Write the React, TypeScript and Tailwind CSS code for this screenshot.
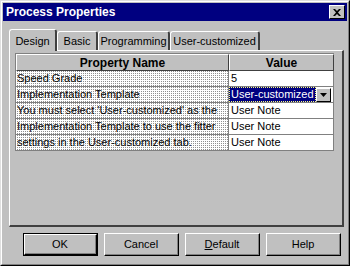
import React from 'react'

const font = { fontFamily: '"Liberation Sans", Arial, sans-serif' }

const rows: { name: string; value: string; combo?: boolean }[] = [
  { name: 'Speed Grade', value: '5' },
  { name: 'Implementation Template', value: 'User-customized', combo: true },
  { name: "You must select 'User-customized' as the", value: 'User Note' },
  { name: 'Implementation Template to use the fitter', value: 'User Note' },
  { name: 'settings in the User-customized tab.', value: 'User Note' },
]

function Tab({ label, active, w }: { label: string; active?: boolean; w: string }) {
  if (active) {
    return (
      <div className={`${w} h-[22px] -mb-px relative z-10 bg-[#c0c0c0] border-t border-l border-white border-r-2 border-r-[#404040] rounded-t-[3px] flex items-center justify-center pt-0.5`}>
        {label}
      </div>
    )
  }
  return (
    <div className={`${w} h-[19px] mt-[3px] bg-[#c0c0c0] border-t border-l border-white border-r-2 border-r-[#404040] rounded-t-[3px] flex items-center justify-center`}>
      {label}
    </div>
  )
}

function Button({ label, def, underline }: { label: string; def?: boolean; underline?: boolean }) {
  return (
    <div className={`w-[75px] h-[23px] flex ${def ? 'border border-black' : ''}`}>
      <div className="flex-1 border-t border-l border-white border-r border-b border-r-black border-b-black">
        <div className="w-full h-full flex items-center justify-center border-r border-b border-[#808080]">
          {underline ? (
            <span><span className="underline">{label[0]}</span>{label.slice(1)}</span>
          ) : label}
        </div>
      </div>
    </div>
  )
}

export default function App() {
  return (
    <div style={font} className="w-[350px] h-[266px] bg-[#c0c0c0] text-[11px] text-black border border-t-[#dfdfdf] border-l-[#dfdfdf] border-r-black border-b-black">
      <div className="w-full h-full border border-t-white border-l-white border-r-[#808080] border-b-[#808080] p-px flex flex-col">
        {/* title bar */}
        <div className="h-[18px] bg-[#000080] flex items-center justify-between pl-[3px] pr-[2px]">
          <span className="text-white font-bold text-[12px] leading-none">Process Properties</span>
          <div className="w-[16px] h-[14px] bg-[#c0c0c0] border border-t-white border-l-white border-r-black border-b-black flex items-center justify-center">
            <svg width="8" height="7" viewBox="0 0 8 7">
              <path d="M0 0h2l2 2 2-2h2L5 3.5 8 7H6L4 5 2 7H0l3-3.5z" fill="#000" />
            </svg>
          </div>
        </div>

        {/* tabs */}
        <div className="flex pl-[6px] mt-[7px] items-end">
          <Tab label="Design" active w="w-[48px]" />
          <Tab label="Basic" w="w-[41px]" />
          <Tab label="Programming" w="w-[72px]" />
          <Tab label="User-customized" w="w-[90px]" />
        </div>

        {/* tab panel */}
        <div className="ml-[6px] mr-[3px] h-[177px] border-t border-l border-white border-r-2 border-b-2 border-r-[#404040] border-b-[#404040] pt-[2px] pl-[5px] pr-[5px]">
          <div className="w-[319px] border-l border-t border-[#808080]">
            <div className="flex h-[17px] font-bold text-[12px]">
              <div className="w-[213px] bg-[#c0c0c0] border-t border-l border-white border-r border-b border-r-[#404040] border-b-[#404040] flex items-center justify-center">Property Name</div>
              <div className="flex-1 bg-[#c0c0c0] border-t border-l border-white border-r border-b border-r-[#404040] border-b-[#404040] flex items-center justify-center">Value</div>
            </div>
            {rows.map(r => (
              <div key={r.name} className="flex h-[16px]">
                <div className="w-[213px] border-r border-b border-[#808080] bg-white bg-[conic-gradient(#909090_0_25%,#ffffff_0_100%)] bg-[length:2px_2px] flex items-center pl-px whitespace-nowrap overflow-hidden">
                  {r.name}
                </div>
                <div className="flex-1 border-r border-b border-[#808080] bg-white flex items-center whitespace-nowrap">
                  {r.combo ? (
                    <div className="flex items-center w-full h-full">
                      <span className="bg-[#000080] text-white px-px h-full flex items-center border border-dotted border-[#ffff80]">{r.value}</span>
                      <div className="ml-auto mr-[2px] w-[15px] h-[14px] bg-[#c0c0c0] border border-t-white border-l-white border-r-black border-b-black flex items-center justify-center">
                        <svg width="7" height="4" viewBox="0 0 7 4"><path d="M0 0h7L3.5 4z" fill="#000" /></svg>
                      </div>
                    </div>
                  ) : (
                    <span className="pl-[2px]">{r.value}</span>
                  )}
                </div>
              </div>
            ))}
          </div>
        </div>

        {/* buttons */}
        <div className="flex gap-[6px] pl-[20px] mt-[6px]">
          <Button label="OK" def />
          <Button label="Cancel" />
          <Button label="Default" underline />
          <Button label="Help" />
        </div>
      </div>
    </div>
  )
}
